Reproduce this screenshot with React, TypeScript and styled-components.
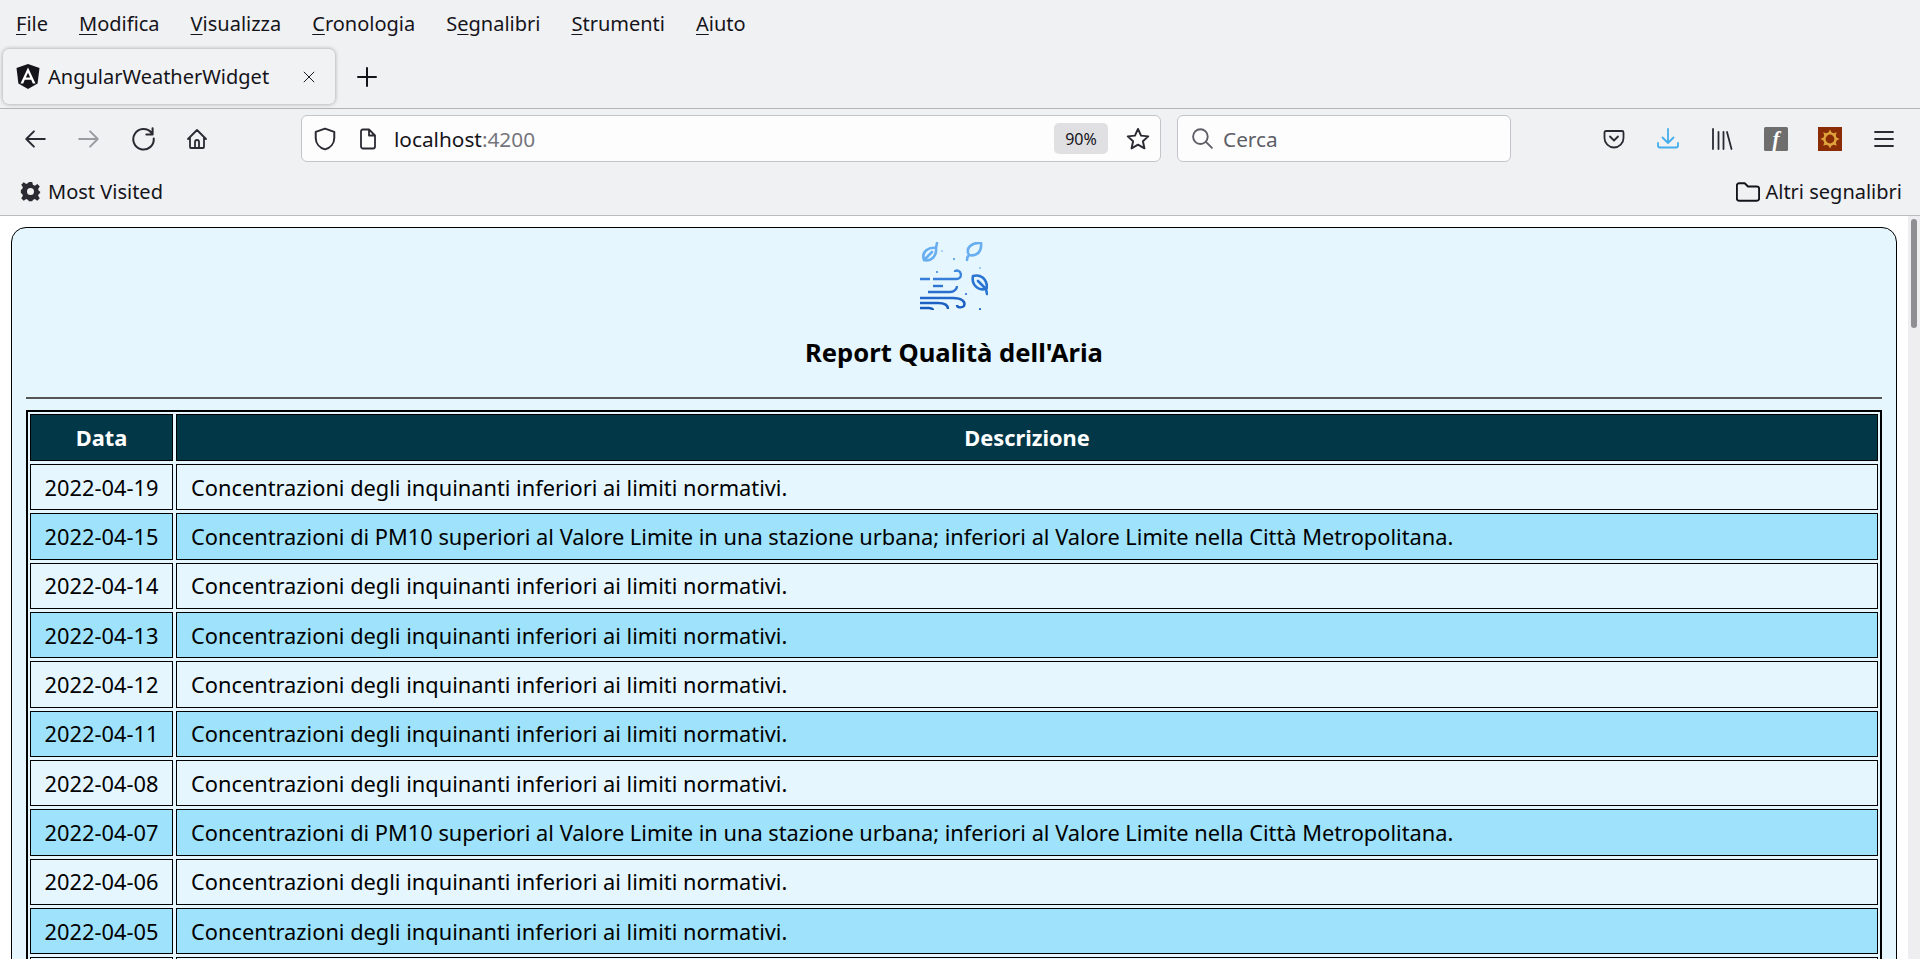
import styled, { createGlobalStyle } from "styled-components";

const GlobalStyle = createGlobalStyle`
    html, body {
        margin: 0;
        height: 100%;
        overflow: hidden;
        background: #ffffff;
    }
`;

const Window = styled.div`
    height: 959px;
    display: flex;
    flex-direction: column;
    overflow: hidden;
    font-family: "Noto Sans", "Liberation Sans", sans-serif;
    color: #15141a;
`;

const Chrome = styled.div`
    background: #f0f1f3;
    flex: none;
`;

const MenuBar = styled.div`
    height: 47px;
    display: flex;
    align-items: center;
    padding-left: 16px;
    gap: 31px;
    font-size: 20px;
`;

const MenuItem = styled.span`
    u {
        text-underline-offset: 3px;
        text-decoration-thickness: 1px;
    }
`;

const TabBar = styled.div`
    height: 59px;
    display: flex;
    align-items: flex-start;
    padding: 2px 0 0 3px;
    border-bottom: 1px solid #b4b5b7;
`;

const Tab = styled.div`
    width: 332px;
    height: 55px;
    box-sizing: border-box;
    display: flex;
    align-items: center;
    padding-left: 13px;
    border-radius: 6px;
    background: #f1f2f4;
    box-shadow: 0 0 4px rgba(0, 0, 0, 0.35);
    font-size: 20px;
`;

const TabTitle = styled.span`
    margin-left: 8px;
    width: 252px;
`;

const NewTab = styled.div`
    width: 22px;
    height: 22px;
    margin: 17px 0 0 21px;
`;

const Toolbar = styled.div`
    height: 59px;
    display: flex;
    align-items: center;
    padding: 0 9px 0 8px;
`;

const ToolButton = styled.div<{ $tone?: string }>`
    width: 54px;
    height: 40px;
    flex: none;
    display: flex;
    align-items: center;
    justify-content: center;
    color: ${(props) => props.$tone ?? "#2b2a33"};
`;

const UrlBar = styled.div`
    width: 860px;
    height: 47px;
    box-sizing: border-box;
    margin-left: 77px;
    display: flex;
    align-items: center;
    background: #fdfdfd;
    border: 1px solid #c4c5c8;
    border-radius: 6px;
    padding-left: 11px;
    font-size: 20.8px;
    color: #2b2a33;
`;

const FileGlyph = styled.div`
    margin-left: 20px;
    display: flex;
`;

const UrlText = styled.span`
    margin-left: 15px;
    flex: 1;
    color: #15141a;
`;

const Port = styled.span`
    color: #75757c;
`;

const ZoomPill = styled.span`
    width: 54px;
    height: 31px;
    display: flex;
    align-items: center;
    justify-content: center;
    background: #e0e0e2;
    border-radius: 5px;
    font-size: 16px;
    color: #15141a;
`;

const StarSlot = styled.div`
    width: 52px;
    box-sizing: border-box;
    padding-left: 7px;
    display: flex;
    justify-content: center;
`;

const SearchBar = styled.div`
    width: 334px;
    height: 47px;
    box-sizing: border-box;
    margin-left: 16px;
    display: flex;
    align-items: center;
    gap: 9px;
    background: #fdfdfd;
    border: 1px solid #c4c5c8;
    border-radius: 6px;
    padding-left: 13px;
    font-size: 20.8px;
    color: #5e5e66;
`;

const RightTools = styled.div`
    margin-left: auto;
    display: flex;
`;

const BookmarksBar = styled.div`
    height: 47px;
    display: flex;
    align-items: center;
    justify-content: space-between;
    padding: 0 18px 0 20px;
    border-bottom: 1px solid #bcbdbf;
    font-size: 20px;
`;

const Bookmark = styled.div<{ $gap: number }>`
    display: flex;
    align-items: center;
    gap: ${(props) => props.$gap}px;
`;

const Viewport = styled.div`
    flex: 1;
    min-height: 0;
    display: flex;
`;

const Page = styled.div`
    flex: 1;
    min-width: 0;
    padding: 11px 11px 0;
`;

const Track = styled.div`
    width: 12px;
    flex: none;
    background: #eeeef0;
    padding: 3px 3px 0;
    box-sizing: border-box;
`;

const Thumb = styled.div`
    height: 109px;
    background: #8f8f93;
    border-radius: 3px;
`;

const Card = styled.div`
    border: 1px solid #000;
    border-radius: 15px;
    background: #e5f6ff;
    padding: 14px 14px 0;
    color: #000;
    font-size: 21.8px;
    min-height: 900px;
`;

const CardHead = styled.div`
    display: flex;
    flex-direction: column;
    align-items: center;
`;

const Heading = styled.h3`
    margin: 26px 0 0;
    font-size: 25.6px;
    line-height: 33px;
    font-weight: 700;
`;

const Rule = styled.hr`
    margin: 28px 0 11px;
    border: 0;
    border-top: 2px solid #555;
`;

const TableFrame = styled.div`
    border: 2px solid #000;
    overflow: hidden;
`;

const ReportTable = styled.table`
    width: calc(100% + 2px);
    margin: -1px;
    border-collapse: separate;
    border-spacing: 3px;
`;

const HeadCell = styled.th`
    height: 47px;
    box-sizing: border-box;
    padding: 0;
    border: 1px solid #000;
    background: #023748;
    color: #fff;
    font-weight: 700;
`;

const DateHead = styled(HeadCell)`
    width: 143px;
`;

const Cell = styled.td<{ $alt: boolean; $date?: boolean }>`
    height: 46.33px;
    box-sizing: border-box;
    padding: 0 ${(props) => (props.$date ? "0" : "14px")};
    border: 1px solid #000;
    background: ${(props) => (props.$alt ? "#9ee3fb" : "#e5f6ff")};
    text-align: ${(props) => (props.$date ? "center" : "left")};
    white-space: nowrap;
`;

const MENU: [string, string, string][] = [
    ["", "F", "ile"],
    ["", "M", "odifica"],
    ["", "V", "isualizza"],
    ["", "C", "ronologia"],
    ["S", "e", "gnalibri"],
    ["", "S", "trumenti"],
    ["", "A", "iuto"],
];

const LOW = "Concentrazioni degli inquinanti inferiori ai limiti normativi.";
const HIGH =
    "Concentrazioni di PM10 superiori al Valore Limite in una stazione urbana; inferiori al Valore Limite nella Città Metropolitana.";

const REPORTS = [
    { date: "2022-04-19", text: LOW },
    { date: "2022-04-15", text: HIGH },
    { date: "2022-04-14", text: LOW },
    { date: "2022-04-13", text: LOW },
    { date: "2022-04-12", text: LOW },
    { date: "2022-04-11", text: LOW },
    { date: "2022-04-08", text: LOW },
    { date: "2022-04-07", text: HIGH },
    { date: "2022-04-06", text: LOW },
    { date: "2022-04-05", text: LOW },
    { date: "", text: "" },
];

function AngularLogo() {
    return (
        <svg width="24" height="25" viewBox="0 0 24 25">
            <path d="M12 0 L23.5 4 L21.6 19.5 L12 25 L2.4 19.5 L0.5 4 Z" fill="#15141a" />
            <path d="M12 3.5 L19.5 19.5 H16.8 L15.2 15.8 H8.8 L7.2 19.5 H4.5 Z M12 8.8 L9.8 13.6 H14.2 Z" fill="#fff" fillRule="evenodd" />
        </svg>
    );
}

function Line({ d, size = 22, width = 1.8 }: { d: string; size?: number; width?: number }) {
    return (
        <svg width={size} height={size} viewBox="0 0 22 22" fill="none" stroke="currentColor" strokeWidth={width} strokeLinecap="round" strokeLinejoin="round">
            <path d={d} />
        </svg>
    );
}

function FlashIcon() {
    return (
        <svg width="24" height="24" viewBox="0 0 24 24">
            <rect width="24" height="24" rx="1.5" fill="#6e6e6e" />
            <text x="12" y="18.5" textAnchor="middle" fill="#fff" fontFamily="Liberation Serif, serif" fontStyle="italic" fontWeight="700" fontSize="21">f</text>
        </svg>
    );
}

function SunIcon() {
    const rays = [0, 45, 90, 135, 180, 225, 270, 315];
    return (
        <svg width="24" height="24" viewBox="0 0 24 24">
            <rect width="24" height="24" fill="#8a2c06" />
            {rays.map((a) => (
                <path key={a} d="M10.2 6 L12 2.4 L13.8 6 Z" fill="#dfa43c" transform={`rotate(${a} 12 12)`} />
            ))}
            <circle cx="12" cy="12" r="5.6" fill="none" stroke="#dfa43c" strokeWidth="2.4" />
        </svg>
    );
}

function AirIcon() {
    return (
        <svg width="68" height="68" viewBox="0 0 68 68" fill="none" strokeLinecap="round" strokeLinejoin="round">
            <defs>
                <linearGradient id="wind" x1="0" y1="25" x2="0" y2="68" gradientUnits="userSpaceOnUse">
                    <stop offset="0" stopColor="#438de4" />
                    <stop offset="1" stopColor="#1558bc" />
                </linearGradient>
            </defs>
            <g stroke="#68aef0" strokeWidth="2.6">
                <path d="M4 18 C1 9 9 5 16 6 C17 14 11 20 4 18 Z M4 18 L12 10 M16 6 L17 1" />
                <path d="M47 18 C47 16 48 14 49 13 C45 6 52 0 61 1 C62 9 57 15 49 13" />
            </g>
            <path d="M53 34 C60 32 67 36 67 46 C60 50 51 44 53 34 M58 39 L66 47 L67 52" stroke="#2a74d2" strokeWidth="2.6" />
            <g stroke="url(#wind)" strokeWidth="2.4" strokeLinecap="butt">
                <path d="M0 37 H10 M13 37 H36 C41 37 42 33 40 30 C38 28 35 28 35 30" />
                <path d="M13 44 H23" />
                <path d="M8 50 H30 C34 50 37 47 37 44" />
                <path d="M0 56 H33 C42 56 46 60 44 64 C42 66 37 66 37 63" />
                <path d="M0 61 H18 C24 61 28 63 28 67" />
                <path d="M0 66 H9 C11 66 13 67 13 68" />
            </g>
            <circle cx="22" cy="9" r="1.1" fill="#9accf4" />
            <circle cx="34" cy="17" r="1.1" fill="#4d9ae6" />
            <circle cx="60" cy="26" r="1.1" fill="#8cc2f0" />
            <circle cx="17" cy="30" r="1.1" fill="#3f8ae0" />
            <circle cx="46" cy="52" r="1.1" fill="#2a72d0" />
            <circle cx="60" cy="67" r="1.1" fill="#1b62c4" />
        </svg>
    );
}

function App() {
    return (
        <Window>
            <GlobalStyle />
            <Chrome>
                <MenuBar>
                    {MENU.map(([before, key, after]) => (
                        <MenuItem key={key + after}>
                            {before}
                            <u>{key}</u>
                            {after}
                        </MenuItem>
                    ))}
                </MenuBar>
                <TabBar>
                    <Tab>
                        <AngularLogo />
                        <TabTitle>AngularWeatherWidget</TabTitle>
                        <Line size={18} width={1.2} d="M5 5 L17 17 M17 5 L5 17" />
                    </Tab>
                    <NewTab>
                        <Line width={2} d="M11 2 V20 M2 11 H20" />
                    </NewTab>
                </TabBar>
                <Toolbar>
                    <ToolButton>
                        <Line size={24} d="M20 11 H3 M10 4 L3 11 L10 18" />
                    </ToolButton>
                    <ToolButton $tone="#9b9ba0">
                        <Line size={24} d="M2 11 H19 M12 4 L19 11 L12 18" />
                    </ToolButton>
                    <ToolButton>
                        <Line size={25} d="M18 6 A9 9 0 1 0 20 11 M19 2 V7.5 H13.5" />
                    </ToolButton>
                    <ToolButton>
                        <Line d="M2 11 L11 2 L20 11 M4 9 V19 A1 1 0 0 0 5 20 H17 A1 1 0 0 0 18 19 V9 M9 20 V14 A2 2 0 0 1 13 14 V20" />
                    </ToolButton>
                    <UrlBar>
                        <Line d="M11 1.5 L19.5 4.5 V10 C19.5 15 16 19 11 20.5 C6 19 2.5 15 2.5 10 V4.5 Z" size={24} />
                        <FileGlyph>
                            <Line size={22} d="M4 3 A2 2 0 0 1 6 1.5 H12 L18 7.5 V18.5 A2 2 0 0 1 16 20.5 H6 A2 2 0 0 1 4 18.5 Z M12 1.5 V7.5 H18" />
                        </FileGlyph>
                        <UrlText>
                            localhost<Port>:4200</Port>
                        </UrlText>
                        <ZoomPill>90%</ZoomPill>
                        <StarSlot>
                            <Line size={24} d="M11 1.8 L13.8 7.9 L20.4 8.6 L15.5 13 L16.9 19.6 L11 16.2 L5.1 19.6 L6.5 13 L1.6 8.6 L8.2 7.9 Z" />
                        </StarSlot>
                    </UrlBar>
                    <SearchBar>
                        <Line size={23} d="M14.5 14.5 L20 20 M16 9.2 A7 7 0 1 1 2 9.2 A7 7 0 1 1 16 9.2" />
                        Cerca
                    </SearchBar>
                    <RightTools>
                        <ToolButton>
                            <Line d="M3 3 H19 A1.5 1.5 0 0 1 20.5 4.5 V10 A9.5 9.5 0 0 1 1.5 10 V4.5 A1.5 1.5 0 0 1 3 3 Z M7 8.5 L11 12.5 L15 8.5" />
                        </ToolButton>
                        <ToolButton $tone="#45aeea">
                            <Line d="M11 1 V15 M5.5 9.5 L11 15 L16.5 9.5 M1 15 V17.5 A2 2 0 0 0 3 19.5 H19 A2 2 0 0 0 21 17.5 V15" />
                        </ToolButton>
                        <ToolButton>
                            <Line d="M2 1 V21 M7.5 4 V21 M12.5 4 V21 M16 4 L20.5 21" />
                        </ToolButton>
                        <ToolButton>
                            <FlashIcon />
                        </ToolButton>
                        <ToolButton>
                            <SunIcon />
                        </ToolButton>
                        <ToolButton>
                            <Line d="M2 4 H20 M2 11 H20 M2 18 H20" />
                        </ToolButton>
                    </RightTools>
                </Toolbar>
                <BookmarksBar>
                    <Bookmark $gap={7}>
                        <svg width="21" height="21" viewBox="0 0 24 24" fill="#2b2a33">
                            <path
                                fillRule="evenodd"
                                d="M10 1 H14 L14.7 4.4 L16.9 5.3 L19.8 3.4 L22.6 6.2 L20.7 9.1 L21.6 11.3 L23 12 V14 L21.6 14.7 L20.7 16.9 L22.6 19.8 L19.8 22.6 L16.9 20.7 L14.7 21.6 L14 23 H10 L9.3 21.6 L7.1 20.7 L4.2 22.6 L1.4 19.8 L3.3 16.9 L2.4 14.7 L1 14 V10 L2.4 9.3 L3.3 7.1 L1.4 4.2 L4.2 1.4 L7.1 3.3 L9.3 2.4 Z M12 8 A4 4 0 1 0 12 16 A4 4 0 1 0 12 8 Z"
                            />
                        </svg>
                        Most Visited
                    </Bookmark>
                    <Bookmark $gap={5}>
                        <Line size={24} d="M0.8 5 A2 2 0 0 1 2.8 3 H8 L11 6 H19.2 A2 2 0 0 1 21.2 8 V17 A2 2 0 0 1 19.2 19 H2.8 A2 2 0 0 1 0.8 17 Z" />
                        Altri segnalibri
                    </Bookmark>
                </BookmarksBar>
            </Chrome>
            <Viewport>
                <Page>
                    <Card>
                        <CardHead>
                            <AirIcon />
                            <Heading>Report Qualità dell'Aria</Heading>
                        </CardHead>
                        <Rule />
                        <TableFrame>
                            <ReportTable>
                                <thead>
                                    <tr>
                                        <DateHead>Data</DateHead>
                                        <HeadCell>Descrizione</HeadCell>
                                    </tr>
                                </thead>
                                <tbody>
                                    {REPORTS.map((report, i) => (
                                        <tr key={i}>
                                            <Cell $date $alt={i % 2 === 1}>{report.date}</Cell>
                                            <Cell $alt={i % 2 === 1}>{report.text}</Cell>
                                        </tr>
                                    ))}
                                </tbody>
                            </ReportTable>
                        </TableFrame>
                    </Card>
                </Page>
                <Track>
                    <Thumb />
                </Track>
            </Viewport>
        </Window>
    );
}

export default App;
